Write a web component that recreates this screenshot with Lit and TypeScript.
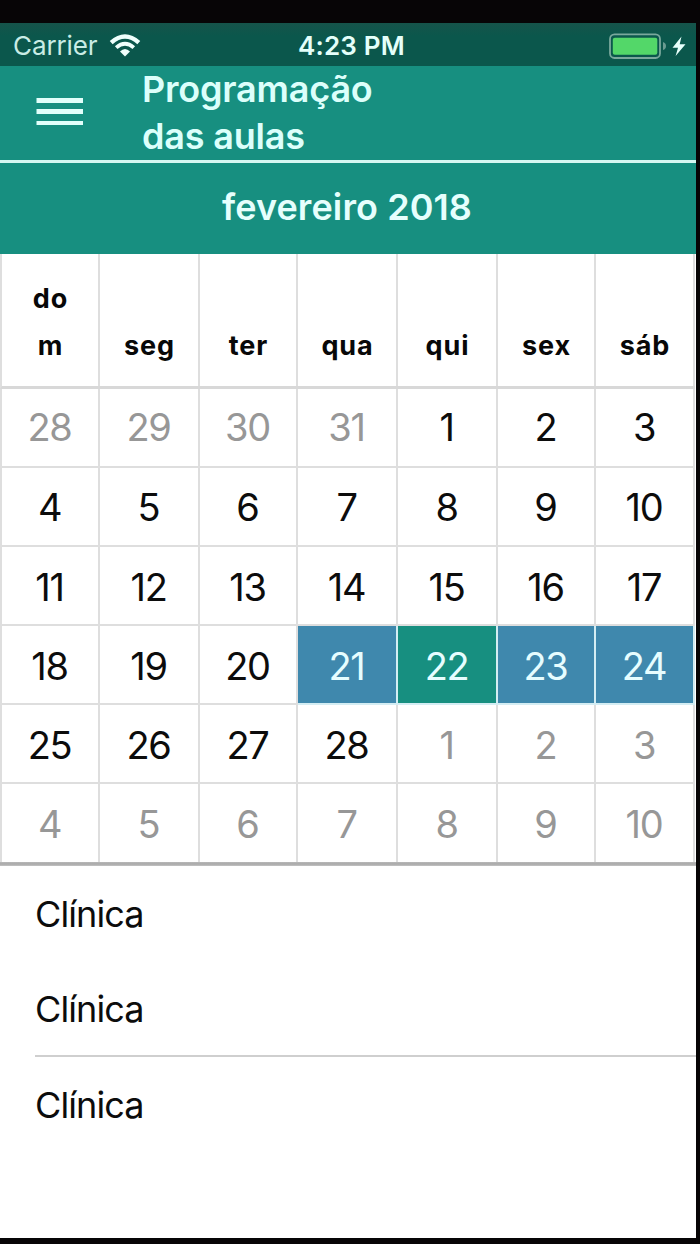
import { LitElement, html, css } from "lit";
import { customElement } from "lit/decorators.js";
import { classMap } from "lit/directives/class-map.js";

const WEEKDAYS = ["do m", "seg", "ter", "qua", "qui", "sex", "sáb"];
const WEEKS = [
  [28, 29, 30, 31, 1, 2, 3],
  [4, 5, 6, 7, 8, 9, 10],
  [11, 12, 13, 14, 15, 16, 17],
  [18, 19, 20, 21, 22, 23, 24],
  [25, 26, 27, 28, 1, 2, 3],
  [4, 5, 6, 7, 8, 9, 10],
];

@customElement("status-bar")
class StatusBar extends LitElement {
  static styles = css`
    :host {
      display: grid;
      grid-template-columns: 1fr auto 1fr;
      align-items: center;
      height: 43px;
      box-sizing: border-box;
      padding: 0 9px 0 13px;
      background: linear-gradient(#16544a, #0b574c 30%, #0b574c);
      color: #e4fffa;
      font-size: 26px;
      line-height: 45px;
    }
    .left { display: flex; align-items: center; gap: 11px; letter-spacing: -0.1px; color: #c9ece5; }
    .time { font-weight: 600; font-size: 26px; letter-spacing: 0.2px; padding-left: 3px; }
    .right { display: flex; justify-content: flex-end; }
    svg { display: block; }
  `;
  render() {
    return html`
      <div class="left">
        <span>Carrier</span>
        <svg width="32" height="24" viewBox="0 0 32 24" fill="none" stroke="#f0fffc">
          <path d="M2.2 8.6Q16 -3.6 29.8 8.6" stroke-width="4.4" />
          <path d="M7.2 13.7Q16 5.9 24.8 13.7" stroke-width="3.8" />
          <path d="M11 17.6Q16 12.6 21 17.6L16 22.6Z" fill="#f0fffc" stroke="none" />
        </svg>
      </div>
      <div class="time">4:23 PM</div>
      <div class="right">
        <svg width="78" height="28" viewBox="0 0 78 28">
          <rect x="1" y="2.4" width="50" height="23.6" rx="4.5" fill="#0b574c" stroke="#7aa89c" stroke-width="1.8" />
          <rect x="3.8" y="5.8" width="44.5" height="17" rx="2" fill="#53d769" />
          <path d="M54 10Q57 11 57 14T54 18Z" fill="#6b9b91" />
          <path d="M72.5 4.5L63.5 15.8H69L66.6 24L76.5 12.3H70.7Z" fill="#e8fffb" />
        </svg>
      </div>
    `;
  }
}

@customElement("month-calendar")
class MonthCalendar extends LitElement {
  static styles = css`
    :host { display: block; background: #fff; }
    .month {
      height: 91px;
      box-sizing: border-box;
      padding-right: 2px;
      background: #178f80;
      color: #e6fffd;
      font-size: 36px;
      font-weight: 600;
      letter-spacing: 0.1px;
      line-height: 89px;
      text-align: center;
    }
    .row {
      display: grid;
      grid-template-columns: 98px 100px 98px 100px 100px 98px 99px;
      grid-template-rows: 100%;
      width: 695px;
      box-sizing: border-box;
      border-left: 2px solid #dedede;
    }
    .head {
      height: 135px;
      border-bottom: 3px solid #d8d8d8;
    }
    .name {
      display: flex;
      align-items: flex-end;
      justify-content: center;
      padding: 0 21px 17px 22px;
      border-right: 2px solid #dedede;
      color: #080808;
      font-size: 27px;
      font-weight: 700;
      letter-spacing: 0.9px;
      line-height: 47px;
      text-align: center;
    }
    .week { height: 79px; }
    .day {
      box-sizing: border-box;
      padding-right: 1px;
      border-right: 2px solid #dedede;
      border-bottom: 2px solid #dedede;
      color: #0c0c0c;
      font-size: 38px;
      line-height: 80px;
      letter-spacing: -1.3px;
      text-align: center;
    }
    .week-0 .day { line-height: 76px; }
    .week-1 .day { line-height: 78px; }
    .muted { color: #979797; }
    .event, .today { border-color: #d4edf3; color: #e6fdff; }
    .event { background: #3f88ad; background-clip: padding-box; }
    .today { background: #178f80; background-clip: padding-box; }
    .week-5 { height: 78px; }
    .week-5 .day { border-bottom: 0; }
    .end { height: 4px; background: linear-gradient(#b8b8b8, #a9a9a9 50%, #c4c4c4); }
  `;
  render() {
    return html`
      <div class="month">fevereiro 2018</div>
      <div class="row head">${WEEKDAYS.map((d) => html`<div class="name">${d}</div>`)}</div>
      ${WEEKS.map(
        (week, w) => html`<div class="row week week-${w}">
          ${week.map((d, i) => {
            const muted = (w === 0 && i < 4) || (w === 4 && i > 3) || w === 5;
            const today = w === 3 && d === 22;
            const event = w === 3 && d > 20 && !today;
            return html`<div class=${classMap({ day: true, muted, today, event })}>${d}</div>`;
          })}
        </div>`
      )}
      <div class="end"></div>
    `;
  }
}

@customElement("app-root")
class AppRoot extends LitElement {
  static styles = css`
    :host {
      display: block;
      width: 700px;
      height: 1244px;
      box-sizing: border-box;
      padding: 23px 4px 6px 0;
      overflow: hidden;
      background: #070506;
      font-family: Inter, "Liberation Sans", sans-serif;
    }
    .screen { height: 1215px; background: #fff; }
    .bar {
      display: flex;
      height: 97px;
      box-sizing: border-box;
      border-bottom: 3px solid #d5f7f2;
      background: #178f80;
      color: #dcfffb;
    }
    .menu { display: block; padding: 31px 59px 0 36px; }
    .title { font-size: 36px; font-weight: 600; line-height: 47px; letter-spacing: -0.2px; }
    .item {
      height: 95px;
      margin-left: 35px;
      box-sizing: border-box;
      color: #0c0c0c;
      font-size: 36px;
      letter-spacing: -0.9px;
      line-height: 97px;
    }
    .ruled { height: 96px; border-bottom: 2px solid #cfcfcf; }
    .last { line-height: 96px; }
  `;
  render() {
    return html`
      <div class="screen">
        <status-bar></status-bar>
        <div class="bar">
          <svg class="menu" width="47" height="29" viewBox="0 0 47 29" fill="#e2fffb">
            <rect x="0.5" y="1" width="46.5" height="5" />
            <rect x="0.5" y="12" width="46.5" height="5" />
            <rect x="0.5" y="24" width="46.5" height="4" />
          </svg>
          <div class="title">Programação<br />das aulas</div>
        </div>
        <month-calendar></month-calendar>
        <div class="item">Clínica</div>
        <div class="item ruled">Clínica</div>
        <div class="item last">Clínica</div>
      </div>
    `;
  }
}
